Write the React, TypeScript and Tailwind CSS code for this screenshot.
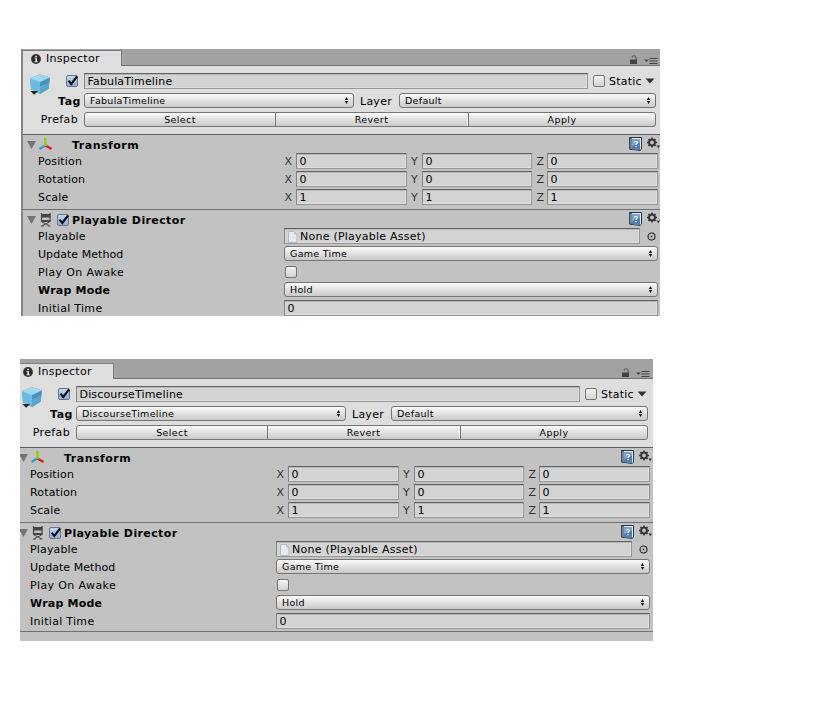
import type { ReactNode } from 'react';

function Info() {
  return (
    <svg width="10" height="10" viewBox="0 0 10 10" className="shrink-0">
      <circle cx="5" cy="5" r="4.9" fill="#2e2e2e" />
      <path d="M4.2 1.8h1.8v1.5H4.2zM3.6 4.2H6v3.1h.7v.9H3.5v-.9h.8V5.1h-.7z" fill="#e6e6e6" />
    </svg>
  );
}

function Lock() {
  return (
    <svg width="8" height="10" viewBox="0 0 8 10" className="shrink-0">
      <path d="M2 2.6C2.2 1.2 3 .7 4 .7c1.400 0 2.100.8 2.100 2.100V5" fill="none" stroke="#5c5c5c" strokeWidth="1.100" />
      <rect x="0" y="4.500" width="7" height="4.500" fill="#424242" />
    </svg>
  );
}

function MenuIcon() {
  return (
    <svg width="14" height="8" viewBox="0 0 14 8" className="shrink-0">
      <path d="M0 2.500h5L2.500 5z" fill="#4a4a4a" />
      <path d="M5.500 1.500h8M5.500 4h8M5.500 6.500h8" stroke="#444" strokeWidth="1" />
    </svg>
  );
}

function Cube() {
  return (
    <svg width="22" height="23" viewBox="0 0 22 23" className="shrink-0">
      <path d="M1 5 11 1.300l9.700 3-.9 11.200L11 21 2 16.300z" fill="#4f9cc6" />
      <path d="M1 5 11 1.300l9.700 3L11 8.800z" fill="#a3d6ec" />
      <path d="M1 5l10 3.800V21l-9-4.700z" fill="#6dbbe0" />
      <path d="M11 8.800l9.700-4.500-.9 11.200L11 21z" fill="#4591bd" />
      <path d="M11 13l9.300-3.500-.5 6L11 21z" fill="#6fbddf" opacity=".5" />
      <path d="M1 5l10 3.800 9.700-4.500" fill="none" stroke="#b9e2f2" strokeWidth=".6" />
      <path d="M1.200 18h8l-4 3.800z" fill="#2c2622" />
    </svg>
  );
}

function Axis() {
  return (
    <svg width="15" height="13" viewBox="0 0 15 13" className="shrink-0">
      <path d="M7 7.500 1.500 11" stroke="#2f9fd0" strokeWidth="2.600" />
      <path d="M7.500 7.500 13.500 11" stroke="#dc2020" strokeWidth="2.600" />
      <path d="M7.300 0v8" stroke="#8ccf20" strokeWidth="2.600" />
    </svg>
  );
}

function Chair() {
  return (
    <svg width="12" height="14" viewBox="0 0 12 14" className="shrink-0">
      <path d="M1.500 0v8.500M10 0v8.500" stroke="#444" strokeWidth="1.200" />
      <path d="M1 1h9.500v3.500H1zM1 7h9.500v2H1z" fill="#444" />
      <path d="M2 9l7.500 3.800M9.500 9 2 12.800M1 13h3M7.500 13h3" stroke="#4c4c4c" strokeWidth="1" />
    </svg>
  );
}

function Help() {
  return (
    <svg width="13" height="14" viewBox="0 0 13 14" className="shrink-0">
      <path d="M.5.5h12v11.700l-1.500 1.300L.5 12z" fill="#e2e8ee" stroke="#25344c" />
      <path d="M0 .5h3V13L0 12z" fill="#35455f" />
      <path d="M1.500 1.500h1v10.500l-1-.4z" fill="#b4c4d6" />
      <path d="M3 2.200l8 .3v10.700l-8-1z" fill="#527dac" />
      <path d="M3 2.200l8 .3v3l-8 4z" fill="#7ea3c8" />
      <path d="M5.500 5.300c.2-1 2.900-1.100 3 .3 0 1.100-1.500 1.100-1.500 2.400M7 9v1.200" fill="none" stroke="#fff" strokeWidth="1.100" />
    </svg>
  );
}

function Gear() {
  return (
    <svg width="13" height="13" viewBox="0 0 13 13" className="shrink-0">
      <circle cx="5" cy="5.500" r="2.900" fill="none" stroke="#333" strokeWidth="1.900" />
      <path d="M5 .5v2M5 8.500v2M0 5.500h2M8 5.500h2M1.500 2l1.300 1.300M7.200 7.700 8.500 9M8.500 2 7.200 3.300M1.500 9l1.300-1.300" stroke="#333" strokeWidth="1.700" />
      <path d="M9.500 8.500H13l-1.700 2.700z" fill="#333" />
    </svg>
  );
}

function Doc() {
  return (
    <svg width="10" height="12" viewBox="0 0 10 12" className="shrink-0">
      <path d="M.5.5h6l2.500 2.500v8.500H.5z" fill="#e4eaef" stroke="#b4b9bd" />
      <path d="M6.500.5V3H9" fill="#c9ced2" stroke="#b4b9bd" />
    </svg>
  );
}

function Target() {
  return (
    <svg width="9" height="9" viewBox="0 0 9 9" className="shrink-0">
      <circle cx="4.500" cy="4.500" r="3.500" fill="none" stroke="#222" strokeWidth="1.100" />
      <rect x="3.800" y="3.800" width="1.400" height="1.400" fill="#111" />
    </svg>
  );
}

function Foldout() {
  return (
    <svg width="10" height="8" viewBox="0 0 10 8" className="shrink-0">
      <path d="M0 0h9L4.500 8z" fill="#747474" />
    </svg>
  );
}

function Check({ on = false }: { on?: boolean }) {
  return (
    <span className={`block size-3 shrink-0 rounded-[2px] border bg-linear-to-b ${on ? 'border-[#66758d] from-[#c2d8f3] to-[#8cadd9]' : 'border-[#757575] from-[#f4f4f4] to-[#d2d2d2]'}`}>
      {on && (
        <svg width="12" height="12" viewBox="0 0 12 12" className="-mt-px block overflow-visible">
          <path d="M1.500 5.600 4.300 9 10 1.500" fill="none" stroke="#101010" strokeWidth="2.100" />
        </svg>
      )}
    </span>
  );
}

function Field({ className, children }: { className: string; children?: ReactNode }) {
  return (
    <div className={`flex h-4 shrink-0 items-center border border-t-[#626262] border-r-[#969696] border-b-[#969696] border-l-[#858585] bg-[#d3d3d3] pt-[2px] pl-[2.5px] shadow-[inset_0_1px_0_#b8b8b8,inset_-1px_-1px_0_#dfdfdf] ${className}`}>
      {children}
    </div>
  );
}

function Popup({ className, children }: { className: string; children: ReactNode }) {
  return (
    <div className={`flex h-[15px] shrink-0 items-center justify-between rounded-[3px] border border-[#767676] bg-linear-to-b from-[#fafafa] to-[#c9c9c9] pr-1 pl-[5px] text-[9.5px] tracking-[0.3px] ${className}`}>
      <span className="leading-[13px]">{children}</span>
      <svg width="5" height="7" viewBox="0 0 5 7">
        <path d="M2.500 0 4.200 3H.8zM2.500 7 .8 4h3.400z" fill="#151515" />
      </svg>
    </div>
  );
}

function Label({ children, className }: { children: ReactNode; className: string }) {
  return <span className={`w-[246px] shrink-0 pt-[2px] ${className}`}>{children}</span>;
}

function Row({ children }: { children: ReactNode }) {
  return <div className="flex h-[18px] items-center pl-[17px]">{children}</div>;
}

function VectorRow({ label, value }: { label: string; value: string }) {
  return (
    <Row>
      <Label className="tracking-[0.15px]">{label}</Label>
      <span className="w-3 pt-[2px] pl-[0.5px] text-[#333]">X</span>
      <Field className="w-[111px]">{value}</Field>
      <span className="ml-[4px] w-[11px] pt-[2px] text-[#333]">Y</span>
      <Field className="w-[110px]">{value}</Field>
      <span className="ml-[4px] w-[11px] pt-[2px] pl-[0.5px] text-[#333]">Z</span>
      <Field className="w-[111px]">{value}</Field>
    </Row>
  );
}

function SectionTools() {
  return (
    <div className="ml-auto flex h-4 w-8 items-start gap-[5px]">
      <Help />
      <Gear />
    </div>
  );
}

function Inspector({ name, className }: { name: string; className: string }) {
  return (
    <div className={`w-[640px] bg-[#c2c2c2] ${className}`}>
      <div className="flex h-5 items-end bg-[#a2a2a2]">
        <div className="z-10 flex h-4 w-[101px] items-center gap-[5px] rounded-tr-[2px] border-t border-r border-[#7c7c7c] bg-[#dedede] pl-[10px] tracking-[0.27px]">
          <Info />
          <span>Inspector</span>
        </div>
        <div className="flex h-full grow items-end justify-end gap-[6px] border-b border-[#707070] pr-[3px]">
          <Lock />
          <MenuIcon />
        </div>
      </div>

      <div className="h-[69px] border-b border-[#5e5e5e] bg-[#dedede] pt-[7px]">
        <div className="flex h-5">
          <div className="ml-2 h-5 w-[37px]"><Cube /></div>
          <div className="w-[18px] pt-[2px]"><Check on /></div>
          <Field className="w-[504px]"><span className="tracking-[0.16px]">{name}</span></Field>
          <div className="ml-[5px] flex h-4 items-center gap-1">
            <Check />
            <span className="w-[33px] pt-[2px] tracking-[0.2px]">Static</span>
            <svg width="10" height="6" viewBox="0 0 10 6" className="ml-[-1px]">
              <path d="M.5 .500h9L5 5.500z" fill="#333" />
            </svg>
          </div>
        </div>
        <div className="flex h-[19px] items-center pb-1">
          <span className="w-[63px] pt-[2px] pr-[3px] text-right font-bold tracking-[0.5px]">Tag</span>
          <Popup className="w-[270px]">{name}</Popup>
          <span className="ml-[6px] w-[39px] pt-[2px] tracking-[0.25px]">Layer</span>
          <Popup className="w-[257px]">Default</Popup>
        </div>
        <div className="flex h-[15px] items-center">
          <span className="w-[63px] pt-px pr-[6px] text-right tracking-[0.35px]">Prefab</span>
          <div className="flex h-[15px] w-[572px] overflow-hidden rounded-[3px] border border-[#767676] bg-linear-to-b from-[#fafafa] to-[#c9c9c9] text-center text-[9.5px] leading-[13px] tracking-[0.4px]">
            <span className="w-[191px] border-r border-[#767676]">Select</span>
            <span className="w-[192px] border-r border-[#efefef]">Revert</span>
            <span className="grow border-l border-[#767676]">Apply</span>
          </div>
        </div>
      </div>

      <div className="h-[75px] border-b border-[#707070]">
        <div className="flex h-[17px] items-center pt-[2px] pl-[6px]">
          <Foldout />
          <div className="ml-px w-[34px]"><Axis /></div>
          <span className="pt-[2px] font-bold tracking-[0.5px]">Transform</span>
          <SectionTools />
        </div>
        <VectorRow label="Position" value="0" />
        <VectorRow label="Rotation" value="0" />
        <VectorRow label="Scale" value="1" />
      </div>

      <div className="h-[109px] border-b border-[#707070]">
        <div className="flex h-[17px] items-center pt-[2px] pl-[6px]">
          <Foldout />
          <div className="ml-[3px] w-[17px]"><Chair /></div>
          <Check on />
          <span className="ml-[3px] pt-[2px] font-bold tracking-[0.38px]">Playable Director</span>
          <SectionTools />
        </div>
        <Row>
          <Label className="tracking-[0.15px]">Playable</Label>
          <Field className="w-[356px]">
            <Doc />
            <span className="ml-[2.5px] tracking-[0.24px]">None (Playable Asset)</span>
          </Field>
          <div className="ml-[7px]"><Target /></div>
        </Row>
        <Row>
          <Label className="tracking-[0.05px]">Update Method</Label>
          <Popup className="mb-px w-[374px]">Game Time</Popup>
        </Row>
        <Row>
          <Label className="tracking-[0.38px]">Play On Awake</Label>
          <div className="ml-px"><Check /></div>
        </Row>
        <Row>
          <Label className="font-bold tracking-[0.2px]">Wrap Mode</Label>
          <Popup className="mb-px w-[374px]">Hold</Popup>
        </Row>
        <Row>
          <Label className="tracking-[0.3px]">Initial Time</Label>
          <Field className="w-[374px]">0</Field>
        </Row>
      </div>
      <div className="h-[9px]" />
    </div>
  );
}

export default function App() {
  return (
    <main className="h-[704px] w-[818px] overflow-hidden bg-white pt-[49px] font-['DejaVu_Sans','Liberation_Sans',sans-serif] text-[11px] leading-[14px] whitespace-nowrap text-black">
      <section className="ml-[21px] h-[267px] w-[639px] overflow-hidden border-l-2 border-[#858585]">
        <Inspector name="FabulaTimeline" className="-mt-[3px] -ml-[2px] [clip-path:inset(0_0_0_2px)]" />
      </section>
      <section className="mt-[43px] ml-5 h-[282px] w-[633px] overflow-hidden">
        <Inspector name="DiscourseTimeline" className="-ml-[7px]" />
      </section>
    </main>
  );
}
